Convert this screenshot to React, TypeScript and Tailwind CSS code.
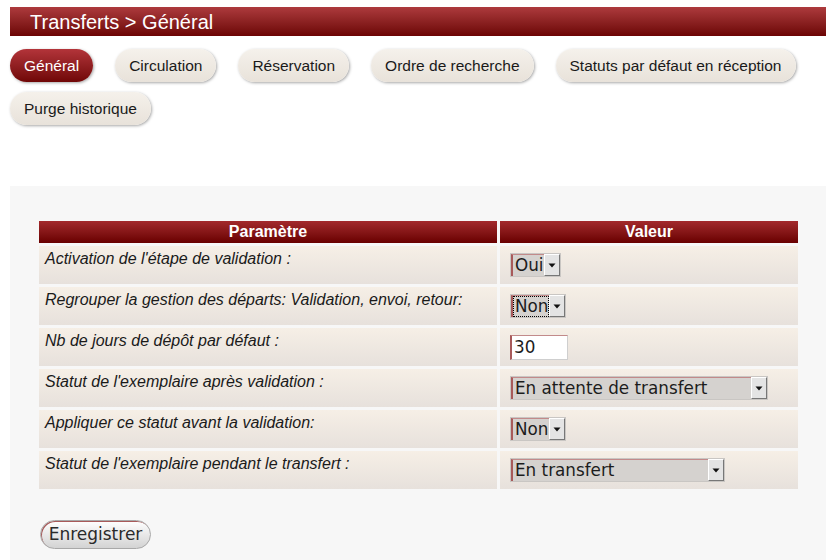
import React from "react";

const tabs = [
  "Général",
  "Circulation",
  "Réservation",
  "Ordre de recherche",
  "Statuts par défaut en réception",
  "Purge historique",
];

function Arrow() {
  return (
    <div className="flex h-full w-[16px] items-center justify-center border-t border-l border-t-white border-l-white border-r border-b border-r-[#777] border-b-[#777] bg-[#e4e4e4]">
      <svg width="8" height="5" viewBox="0 0 8 5">
        <polygon points="0.5,0.5 7.5,0.5 4,4.5" fill="#111" />
      </svg>
    </div>
  );
}

function Sel({ label, className, focus }: { label: string; className: string; focus?: boolean }) {
  return (
    <div className={"flex h-[24px] border border-[#c9c6c3] bg-[#d5d2cf] " + className}>
      <div className="flex flex-1 items-stretch border-t border-t-[#c28a8a] border-l-2 border-l-[#a85a5a]">
        <div
          className={
            "flex flex-1 items-center overflow-hidden whitespace-nowrap pl-[2px] text-[16.8px] leading-none text-[#1c1c1c] font-['DejaVu_Sans',sans-serif] " +
            (focus ? "outline-1 outline-dotted outline-black -outline-offset-1" : "")
          }
        >
          {label}
        </div>
      </div>
      <Arrow />
    </div>
  );
}

function Input({ value }: { value: string }) {
  return (
    <div className="flex h-[25px] w-[58px] items-center border border-[#cfcfcf] border-t-[#c28a8a] border-l-2 border-l-[#a85a5a] bg-white pl-[2px] text-[16.8px] leading-none text-[#1c1c1c] font-['DejaVu_Sans',sans-serif]">
      {value}
    </div>
  );
}

const rows: { label: string; control: React.ReactNode }[] = [
  { label: "Activation de l'étape de validation :", control: <Sel label="Oui" className="w-[51px]" /> },
  {
    label: "Regrouper la gestion des départs: Validation, envoi, retour:",
    control: <Sel label="Non" className="w-[56px]" focus />,
  },
  { label: "Nb de jours de dépôt par défaut :", control: <Input value="30" /> },
  {
    label: "Statut de l'exemplaire après validation :",
    control: <Sel label="En attente de transfert" className="w-[258px]" />,
  },
  { label: "Appliquer ce statut avant la validation:", control: <Sel label="Non" className="w-[56px]" /> },
  {
    label: "Statut de l'exemplaire pendant le transfert :",
    control: <Sel label="En transfert" className="w-[215px]" />,
  },
];

export default function App() {
  return (
    <div className="min-h-[560px] w-[840px] overflow-hidden bg-white font-['Liberation_Sans',Arial,sans-serif]">
      <div className="ml-[10px] mt-[7px] flex h-[29px] w-[816px] items-center bg-gradient-to-b from-[#ad3a3d] to-[#6c0404] pl-[20px] text-[20px] text-white">
        Transferts &gt; Général
      </div>

      <div className="ml-[10px] mt-[13px] flex w-[816px] flex-wrap gap-x-[22px] gap-y-[10px]">
        {tabs.map((t, i) => (
          <div
            key={t}
            className={
              "flex h-[33px] items-center rounded-full px-[14px] text-[15.5px] shadow-[1px_1px_3px_rgba(0,0,0,0.35)] " +
              (i === 0
                ? "bg-gradient-to-b from-[#b3343a] to-[#700606] text-white"
                : "bg-gradient-to-b from-[#f5f1eb] to-[#e8e2da] text-[#1a1a1a]")
            }
          >
            {t}
          </div>
        ))}
      </div>

      <div className="ml-[10px] mt-[61px] h-[380px] w-[816px] bg-[#f7f7f7] pl-[29px] pt-[35px]">
        <div className="grid w-[759px] grid-cols-[458px_298px] gap-[3px]">
          <div className="flex h-[22px] items-center justify-center bg-gradient-to-b from-[#a3292c] to-[#690000] text-[16px] font-bold text-white">
            Paramètre
          </div>
          <div className="flex h-[22px] items-center justify-center bg-gradient-to-b from-[#a3292c] to-[#690000] text-[16px] font-bold text-white">
            Valeur
          </div>
          {rows.map((r) => (
            <React.Fragment key={r.label}>
              <div className="h-[38px] bg-gradient-to-b from-[#f6efe6] to-[#e7e1dc] pl-[6px] pt-[3px] text-[16px] italic leading-[19px] text-[#1a1a1a]">
                {r.label}
              </div>
              <div className="flex h-[38px] items-center bg-gradient-to-b from-[#f6efe6] to-[#e7e1dc] pl-[10px]">
                {r.control}
              </div>
            </React.Fragment>
          ))}
        </div>

        <div className="ml-[1px] mt-[31px] flex h-[29px] w-[111px] items-center justify-center rounded-full border border-[#a8a8a8] bg-gradient-to-b from-white to-[#d3d3d3] text-[17px] text-[#2a2a2a] shadow-[inset_1px_1px_0_#a85a5a] font-['DejaVu_Sans',sans-serif]">
          Enregistrer
        </div>
      </div>
    </div>
  );
}
